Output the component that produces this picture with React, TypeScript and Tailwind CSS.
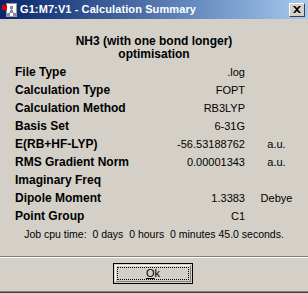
import React from "react";

const rows: [string, string, string][] = [
  ["File Type", ".log", ""],
  ["Calculation Type", "FOPT", ""],
  ["Calculation Method", "RB3LYP", ""],
  ["Basis Set", "6-31G", ""],
  ["E(RB+HF-LYP)", "-56.53188762", "a.u."],
  ["RMS Gradient Norm", "0.00001343", "a.u."],
  ["Imaginary Freq", "", ""],
  ["Dipole Moment", "1.3383", "Debye"],
  ["Point Group", "C1", ""],
];

function AppIcon() {
  return (
    <svg width="16" height="16" viewBox="0 0 16 16" className="shrink-0">
      <rect x="4.5" y="1.5" width="10" height="13" fill="#ffffff" stroke="#9a9a9a" strokeWidth="1" />
      <line x1="9.5" y1="5" x2="9.5" y2="9" stroke="#7a7a9a" strokeWidth="1" />
      <line x1="9.5" y1="9" x2="6.5" y2="12" stroke="#7a7a9a" strokeWidth="1" />
      <line x1="9.5" y1="9" x2="12.5" y2="12" stroke="#7a7a9a" strokeWidth="1" />
      <rect x="8" y="4" width="3" height="3" fill="#8a8aa8" />
      <rect x="8" y="8" width="3" height="3" fill="#8a8aa8" />
      <rect x="5" y="11" width="3" height="3" fill="#8a8aa8" />
      <rect x="11" y="11" width="3" height="3" fill="#8a8aa8" />
      <rect x="0" y="3" width="5" height="5" fill="#e00000" />
    </svg>
  );
}

export default function App() {
  return (
    <div
      className="w-[308px] h-[293px] bg-[#d4d0c8] flex flex-col overflow-hidden"
      style={{ fontFamily: '"Liberation Sans", Arial, sans-serif' }}
    >
      {/* Title bar */}
      <div className="h-[19px] flex items-center bg-gradient-to-r from-[#0a246a] to-[#a6caf0] pl-[2px] pr-[3px] shrink-0">
        <AppIcon />
        <span className="ml-[2px] text-white font-bold text-[11px] leading-none tracking-[0.1px]">
          G1:M7:V1 - Calculation Summary
        </span>
        <div className="ml-auto w-[16px] h-[14px] bg-[#d4d0c8] border border-t-white border-l-white border-r-[#404040] border-b-[#404040] flex items-center justify-center">
          <svg width="8" height="7" viewBox="0 0 8 7">
            <path d="M0 0 L2 0 L4 2 L6 0 L8 0 L5 3.5 L8 7 L6 7 L4 5 L2 7 L0 7 L3 3.5 Z" fill="#000" />
          </svg>
        </div>
      </div>

      {/* Heading */}
      <div className="mt-[16px] shrink-0 flex flex-col items-center text-[12px] font-bold text-black leading-[13px]">
        <div>NH3 (with one bond longer)</div>
        <div>optimisation</div>
      </div>

      {/* Rows */}
      <div className="mt-[2px] shrink-0 flex flex-col">
        {rows.map(([label, value, unit]) => (
          <div key={label} className="h-[18px] shrink-0 grid grid-cols-[140px_90px_63px] items-center pl-[15px]">
            <div className="text-[12px] font-bold text-black whitespace-nowrap leading-none">{label}</div>
            <div className="text-[11px] text-black text-right whitespace-nowrap leading-none">{value}</div>
            <div className="text-[11px] text-black text-center leading-none">{unit}</div>
          </div>
        ))}
        <div className="h-[18px] shrink-0 flex items-center justify-center text-[10.5px] text-black whitespace-pre leading-none">
          {"Job cpu time:  0 days  0 hours  0 minutes 45.0 seconds."}
        </div>
      </div>

      {/* Separator */}
      <div className="mt-[13px] shrink-0 border-t border-t-[#808080] border-b border-b-white" />

      {/* Button */}
      <div className="mt-[5px] shrink-0 flex justify-center pr-[2px]">
        <div className="w-[80px] h-[21px] bg-[#d4d0c8] border border-black p-[1px]">
          <div className="w-full h-full border border-t-white border-l-white border-r-[#808080] border-b-[#808080] p-[1px]">
            <div className="w-full h-full border border-dotted border-black flex items-center justify-center text-[11px] text-black leading-none">
              <span><span className="underline">O</span>k</span>
            </div>
          </div>
        </div>
      </div>

      <div className="mt-auto shrink-0 border-t border-t-[#808080] border-b border-b-[#404040]" />
    </div>
  );
}
